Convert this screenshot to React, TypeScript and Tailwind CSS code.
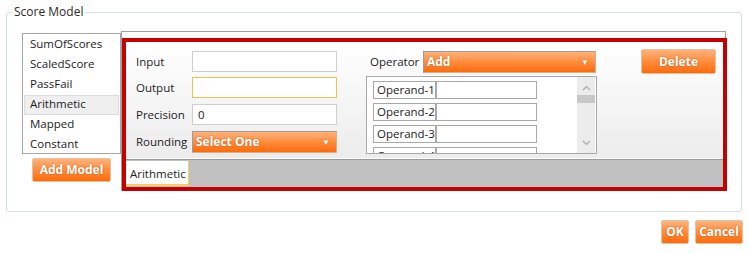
import React from 'react';

const models = ['SumOfScores', 'ScaledScore', 'PassFail', 'Arithmetic', 'Mapped', 'Constant'];
const operands = ['Operand-1', 'Operand-2', 'Operand-3', 'Operand-4'];

const orange =
  'bg-linear-to-b from-[#ffb27a] via-[#ff8c3a] to-[#ff6a00] text-white font-bold [text-shadow:0_0_2px_rgba(140,50,0,0.55)]';

function OrangeButton({ label, className }: { label: string; className: string }) {
  return (
    <button
      className={`${orange} ${className} flex items-center justify-center rounded-[2px] border border-[#e3c2a4] text-[12px] leading-none`}
    >
      {label}
    </button>
  );
}

function Dropdown({ value, className }: { value: string; className: string }) {
  return (
    <div
      className={`${orange} ${className} flex items-center justify-between border border-[#9b9b9b] border-b-[#d8b090] border-r-[#d8b090] pl-[3px] pr-[6px] text-[12px]`}
    >
      <span>{value}</span>
      <span className="text-[8px]">▼</span>
    </div>
  );
}

export default function App() {
  return (
    <div className="w-[748px] h-[253px] bg-white pt-[12px] text-[11.5px] text-[#1c1c24] font-['Open_Sans',sans-serif]">
      <div className="relative ml-[6px] w-[736px] h-[200px] rounded-[3px] border border-[#d3dfe4] pl-[15px] pt-[18px]">
        <span className="absolute -top-[10px] left-[5px] bg-white px-[2px] text-[12px] text-[#2a2a2a]">
          Score Model
        </span>

        <div className="flex items-start">
          {/* model list */}
          <div className="w-[99px] mt-[2px]">
            <div className="h-[121px] border border-[#a6a6a6] pt-[1px] px-[1px]">
              {models.map((m) => (
                <div
                  key={m}
                  className={`h-[20px] leading-[16px] pl-[5px] border ${
                    m === 'Arithmetic' ? 'bg-[#efefef] border-[#dcdcdc]' : 'border-transparent'
                  }`}
                >
                  {m}
                </div>
              ))}
            </div>
            <OrangeButton label="Add Model" className="ml-[10px] mt-[4px] w-[79px] h-[24px]" />
          </div>

          {/* editor */}
          <div className="w-[605px] border-t border-l border-r border-[#a0a0a0] pt-[6px]">
            <div className="w-[605px] h-[153px] border-4 border-[#c40000] flex flex-col">
              <div className="h-[117px] flex border-r border-b border-white bg-linear-to-b from-white to-[#ececec] pl-[10px]">
                {/* left fields */}
                <div className="flex flex-col pt-[9px]">
                  <div className="flex items-center h-[21px]">
                    <span className="w-[56px]">Input</span>
                    <div className="w-[145px] h-[21px] bg-white border border-[#cfcfcf]" />
                  </div>
                  <div className="flex items-center h-[21px] mt-[5px]">
                    <span className="w-[56px]">Output</span>
                    <div className="w-[145px] h-[21px] bg-white border border-[#f0c24a]" />
                  </div>
                  <div className="flex items-center h-[21px] mt-[6px]">
                    <span className="w-[56px]">Precision</span>
                    <div className="w-[145px] h-[21px] bg-white border border-[#cfcfcf] pl-[5px] leading-[19px]">0</div>
                  </div>
                  <div className="flex items-center h-[22px] mt-[6px]">
                    <span className="w-[56px]">Rounding</span>
                    <Dropdown value="Select One" className="w-[145px] h-[22px]" />
                  </div>
                </div>

                {/* operator */}
                <div className="ml-[29px] w-[231px] pt-[9px]">
                  <div className="flex items-center h-[22px]">
                    <span className="w-[57px] pl-[4px]">Operator</span>
                    <Dropdown value="Add" className="w-[173px] h-[22px]" />
                  </div>
                  <div className="mt-[3px] h-[78px] bg-white border border-[#a8a8a8] flex overflow-hidden">
                    <div className="flex-1 pl-[6px] pt-[4px] flex flex-col gap-[4px]">
                      {operands.map((o) => (
                        <div key={o} className="flex h-[18px] shrink-0">
                          <div className="w-[64px] border border-[#a8a8a8] border-r-2 pl-[3px] leading-[16px]">{o}</div>
                          <div className="w-[100px] border border-l-0 border-[#a8a8a8]" />
                        </div>
                      ))}
                    </div>
                    <div className="w-[18px] mr-[1px] bg-[#ececec] flex flex-col items-center text-[#a8a8a8]">
                      <svg width="9" height="6" viewBox="0 0 9 6" className="mt-[8px]">
                        <path d="M1 5 L4.5 1.5 L8 5" fill="none" stroke="currentColor" strokeWidth="1.2" />
                      </svg>
                      <div className="w-full h-[8px] bg-[#c8c8c8] mt-[4px]" />
                      <svg width="9" height="6" viewBox="0 0 9 6" className="mt-[37px]">
                        <path d="M1 1 L4.5 4.5 L8 1" fill="none" stroke="currentColor" strokeWidth="1.2" />
                      </svg>
                    </div>
                  </div>
                </div>

                <div className="ml-[44px] pt-[7px]">
                  <OrangeButton label="Delete" className="w-[75px] h-[25px]" />
                </div>
              </div>
              <div className="h-px bg-[#9a9a9a]" />
              <div className="flex-1 bg-[#c0c0c0] pt-[1px]">
                <div className="w-[63px] h-[25px] bg-white border-b-2 border-r border-[#f3cf6a] pl-[4px] leading-[26px]">
                  Arithmetic
                </div>
              </div>
            </div>
          </div>
        </div>
      </div>

      <div className="flex justify-end gap-[6px] pr-[5px] mt-[8px]">
        <OrangeButton label="OK" className="w-[28px] h-[24px]" />
        <OrangeButton label="Cancel" className="w-[48px] h-[24px]" />
      </div>
    </div>
  );
}
